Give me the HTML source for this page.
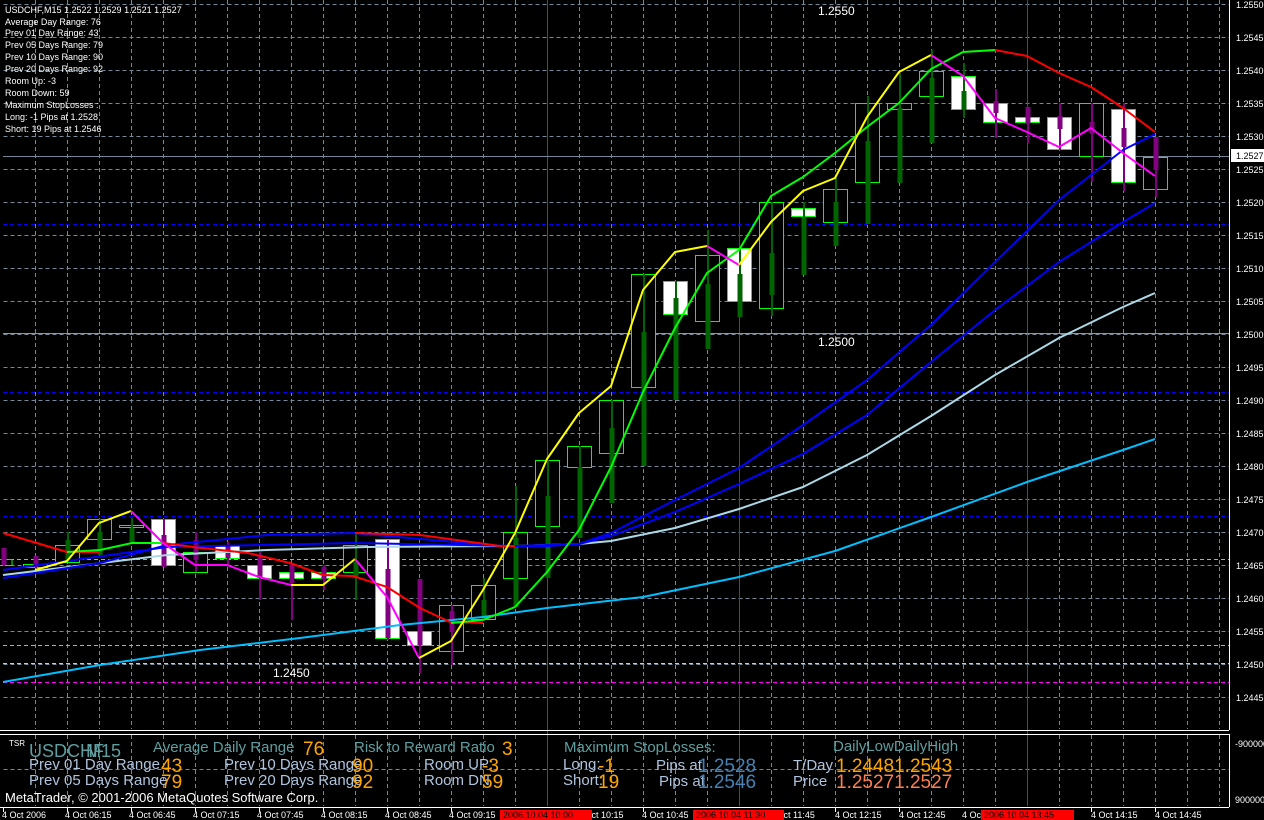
<!DOCTYPE html>
<html><head><meta charset="utf-8"><style>
html,body{margin:0;padding:0;background:#000;}
svg{display:block;font-family:"Liberation Sans",sans-serif;}
</style></head><body>
<svg width="1264" height="820" viewBox="0 0 1264 820" xmlns="http://www.w3.org/2000/svg">
<rect width="1264" height="820" fill="#000"/>
<!-- grid -->
<g stroke="#778899" stroke-width="1" stroke-dasharray="4,3" fill="none">
<path d="M3.5 4.5H1229M3.5 37.5H1229M3.5 70.5H1229M3.5 103.5H1229M3.5 136.5H1229M3.5 169.5H1229M3.5 202.5H1229M3.5 235.5H1229M3.5 268.5H1229M3.5 301.5H1229M3.5 334.5H1229M3.5 367.5H1229M3.5 400.5H1229M3.5 433.5H1229M3.5 466.5H1229M3.5 499.5H1229M3.5 532.5H1229M3.5 565.5H1229M3.5 598.5H1229M3.5 631.5H1229M3.5 664.5H1229M3.5 697.5H1229"/>
<path d="M35.5 0V729M67.5 0V729M99.5 0V729M131.5 0V729M163.5 0V729M195.5 0V729M227.5 0V729M259.5 0V729M291.5 0V729M323.5 0V729M355.5 0V729M387.5 0V729M419.5 0V729M451.5 0V729M483.5 0V729M515.5 0V729M579.5 0V729M611.5 0V729M643.5 0V729M675.5 0V729M707.5 0V729M771.5 0V729M803.5 0V729M835.5 0V729M867.5 0V729M899.5 0V729M931.5 0V729M963.5 0V729M995.5 0V729M1059.5 0V729M1091.5 0V729M1123.5 0V729M1155.5 0V729M1187.5 0V729M1219.5 0V729"/>
<path d="M3.5 769.5H1229M35.5 735V806M67.5 735V806M99.5 735V806M131.5 735V806M163.5 735V806M195.5 735V806M227.5 735V806M259.5 735V806M291.5 735V806M323.5 735V806M355.5 735V806M387.5 735V806M419.5 735V806M451.5 735V806M483.5 735V806M515.5 735V806M579.5 735V806M611.5 735V806M643.5 735V806M675.5 735V806M707.5 735V806M771.5 735V806M803.5 735V806M835.5 735V806M867.5 735V806M899.5 735V806M931.5 735V806M963.5 735V806M995.5 735V806M1059.5 735V806M1091.5 735V806M1123.5 735V806M1155.5 735V806M1187.5 735V806M1219.5 735V806"/>
</g>
<!-- red verticals -->
<g stroke="#ff0000" stroke-width="1"><path d="M547.5 0V806M739.5 0V806M1027.5 0V806"/></g>
<!-- horizontal levels -->
<g stroke-width="1" stroke-dasharray="4,3" fill="none">
<path d="M3 224.5H1229M3 392.5H1229M3 516.5H1229" stroke="#0000ff"/>
<path d="M3 559.5H1229M3 645.5H1229" stroke="#ffa500"/>
<path d="M3 663.5H1229" stroke="#ffd700"/>
<path d="M3 682.5H1229" stroke="#ff00ff"/>
</g>
<path d="M3 333.5H1229" stroke="#b8a000" stroke-width="1"/>
<path d="M3 156.5H1229" stroke="#778899" stroke-width="1"/>
<!-- candles -->
<g id="c" stroke-width="1">
<g fill="#000" stroke="#00ff00">
<rect x="-9" y="559.5" width="21" height="6"/>
<rect x="23.5" y="564.5" width="24" height="3"/>
<rect x="55.5" y="545.5" width="24" height="17"/>
<rect x="87.5" y="519.5" width="24" height="20"/>
<rect x="119.5" y="525.5" width="24" height="2"/>
<rect x="151.5" y="519.5" width="24" height="46" fill="#fff"/>
<rect x="183.5" y="552.5" width="24" height="20"/>
<rect x="215.5" y="545.5" width="24" height="13" fill="#fff"/>
<rect x="247.5" y="565.5" width="24" height="13" fill="#fff"/>
<rect x="279.5" y="572.5" width="24" height="6" fill="#fff"/>
<rect x="311.5" y="572.5" width="24" height="6" fill="#fff"/>
<rect x="343.5" y="545.5" width="24" height="27"/>
<rect x="375.5" y="539.5" width="24" height="99" fill="#fff"/>
<rect x="407.5" y="631.5" width="24" height="14" fill="#fff"/>
<rect x="439.5" y="605.5" width="24" height="46"/>
<rect x="471.5" y="585.5" width="24" height="34"/>
<rect x="503.5" y="532.5" width="24" height="46"/>
<rect x="535.5" y="460.5" width="24" height="66"/>
<rect x="567.5" y="446.5" width="24" height="21"/>
<rect x="599.5" y="400.5" width="24" height="53"/>
<rect x="631.5" y="274.5" width="24" height="113"/>
<rect x="663.5" y="281.5" width="24" height="33" fill="#fff"/>
<rect x="695.5" y="255.5" width="24" height="66"/>
<rect x="727.5" y="248.5" width="24" height="53" fill="#fff"/>
<rect x="759.5" y="202.5" width="24" height="106"/>
<rect x="791.5" y="208.5" width="24" height="8" fill="#fff"/>
<rect x="823.5" y="189.5" width="24" height="33"/>
<rect x="855.5" y="103.5" width="24" height="79"/>
<rect x="887.5" y="103.5" width="24" height="6"/>
<rect x="919.5" y="71.5" width="24" height="25"/>
<rect x="951.5" y="76.5" width="24" height="33" fill="#fff"/>
<rect x="983.5" y="103.5" width="24" height="19" fill="#fff"/>
<rect x="1015.5" y="117.5" width="24" height="5" fill="#fff"/>
<rect x="1047.5" y="117.5" width="24" height="32" fill="#fff"/>
<rect x="1079.5" y="103.5" width="24" height="53"/>
<rect x="1111.5" y="109.5" width="24" height="73" fill="#fff"/>
<rect x="1143.5" y="157.5" width="24" height="32"/>
</g>
<g stroke="#800080" stroke-width="2" fill="none">
<path d="M4 548V566M36 556V568M164 519V566M196 532V572M228 542V565M260 552V600M292 563V620M324 565V590M388 540V640M420 579V673M452 605V665M996 89V138M1028 107V143M1060 103V150M1092 103V182M1124 103V191M1156 137V197"/>
</g>
<g stroke="#800080" stroke-width="5" fill="none">
<path d="M4 548V565M36 556V567M164 535V567M196 540V560M228 545V558M260 555V578M292 563V583M324 567V580M388 569V638M420 579V645M452 611V632M996 101V113M1028 107V124M1060 116V129M1092 122V134M1124 128V147M1156 137V170"/>
</g>
<g stroke="#006400" stroke-width="2" fill="none">
<path d="M68 532V562M100 519V555M132 518V543M356 533V600M484 578V619M516 486V607M548 460V578M580 446V538M612 400V503M644 274V466M676 281V400M708 230V349M740 248V317M772 202V316M804 202V275M836 178V246M868 96V224M900 73V183M932 50V143M964 63V118"/>
</g>
<g stroke="#006400" stroke-width="5" fill="none">
<path d="M68 540V562M100 532V555M132 528V543M356 562V578M484 600V619M516 538V607M548 496V578M580 467V538M612 428V503M644 332V466M676 298V400M708 284V349M740 274V317M772 253V295M804 217V275M836 202V246M868 141V224M900 108V183M932 78V143M964 91V110"/>
</g>
</g>
<!-- MAs -->
<g fill="none" stroke-width="2" stroke-linejoin="round">
<polyline stroke="#00bfff" points="3,682 100,665 200,650 300,638 400,625 483,617 547,608 643,597 739,577 835,551 931,517 1027,482 1123,450 1155,439"/>
<polyline stroke="#add8e6" points="3,575 167,555 267,550 367,547 515,546 579,544 611,541 675,528 739,509 803,487 867,455 931,416 995,375 1059,338 1123,307 1155,293"/>
<polyline stroke="#0000ff" points="3,570 167,547 353,543 515,546 579,544 611,536 675,512 739,484 803,454 867,415 931,362 995,310 1059,262 1123,222 1155,203"/>
<polyline stroke="#0000ff" points="3,578 100,563 167,545 267,535 353,533 500,546 547,546 579,544 611,533 675,500 739,468 803,425 867,380 931,325 995,262 1059,200 1123,150 1155,134"/>
<polyline stroke="#ff0000" points="3,533 67,552 100,552"/>
<polyline stroke="#ff0000" points="163,543 193,547 248,553 290,563 323,575 353,576 387,587 420,608 450,622 483,623"/>
<polyline stroke="#ff0000" points="355,533 420,535 500,546 515,546"/>
<polyline stroke="#00ff00" points="67,552 100,550 132,543 163,543"/>
<polyline stroke="#00ff00" points="451,623 483,620 515,607 547,572 579,530 611,467 643,392 675,328 707,273 739,250 771,196 803,177 835,153 867,127 899,103 931,69 963,52 995,50"/>
<polyline stroke="#ff0000" points="995,50 1027,56 1059,73 1091,87 1123,108 1155,132"/>
<polyline stroke="#ffff00" points="35,570 67,561 99,523 131,511"/>
<polyline stroke="#ff00ff" points="131,511 163,543 195,565 227,565 259,577 291,585"/>
<polyline stroke="#ffff00" points="291,585 323,585 355,559"/>
<polyline stroke="#ff00ff" points="355,559 387,597 419,658"/>
<polyline stroke="#ffff00" points="419,658 451,641 483,590 515,533 547,459 579,413 611,386 643,290 675,252 707,246"/>
<polyline stroke="#ff00ff" points="707,246 739,265"/>
<polyline stroke="#ffff00" points="739,265 771,222 803,191 835,178 867,117 899,72 931,55"/>
<polyline stroke="#ff00ff" points="931,55 963,76 995,118 1027,132 1059,147 1091,128 1123,153 1155,176"/>
</g>
<!-- texts in chart -->
<g fill="#fff" font-size="12"><text x="818" y="15">1.2550</text><text x="818" y="346">1.2500</text><text x="273" y="677">1.2450</text></g>
<g fill="#fff" font-size="9">
<text x="5" y="13">USDCHF,M15  1.2522 1.2529 1.2521 1.2527</text>
<text x="5" y="25">Average Day  Range: 76</text>
<text x="5" y="36">Prev 01  Day  Range: 43</text>
<text x="5" y="48">Prev 05  Days Range: 79</text>
<text x="5" y="60">Prev 10  Days Range: 90</text>
<text x="5" y="72">Prev 20  Days Range: 92</text>
<text x="5" y="84">Room Up:     -3</text>
<text x="5" y="96">Room Down: 59</text>
<text x="5" y="108">Maximum StopLosses :</text>
<text x="5" y="120">Long:  -1 Pips at 1.2528</text>
<text x="5" y="132">Short: 19 Pips at 1.2546</text>
</g>
<!-- right axis -->
<path d="M1229.5 0V730M1229.5 734V807" stroke="#fff" stroke-width="1"/>
<g fill="#fff" font-size="9">
<text x="1236" y="8">1.2550</text><text x="1236" y="41">1.2545</text><text x="1236" y="74">1.2540</text><text x="1236" y="107">1.2535</text><text x="1236" y="140">1.2530</text><text x="1236" y="173">1.2525</text><text x="1236" y="206">1.2520</text><text x="1236" y="239">1.2515</text><text x="1236" y="272">1.2510</text><text x="1236" y="305">1.2505</text><text x="1236" y="338">1.2500</text><text x="1236" y="371">1.2495</text><text x="1236" y="404">1.2490</text><text x="1236" y="437">1.2485</text><text x="1236" y="470">1.2480</text><text x="1236" y="503">1.2475</text><text x="1236" y="536">1.2470</text><text x="1236" y="569">1.2465</text><text x="1236" y="602">1.2460</text><text x="1236" y="635">1.2455</text><text x="1236" y="668">1.2450</text><text x="1236" y="701">1.2445</text>
<text x="1235" y="747">-900000</text><text x="1235" y="803">9000000</text>
</g>
<rect x="1231" y="149" width="33" height="13" fill="#fff"/>
<text x="1236" y="159" font-size="9" fill="#000">1.2527</text>
<!-- panel separators -->
<path d="M0 730.5H1229M0 734.5H1229M0 807.5H1229" stroke="#fff" stroke-width="1"/>
<!-- panel texts -->
<text x="9" y="746" font-size="8" fill="#fff">TSR</text>
<g font-size="18" fill="#5f9ea0"><text x="29" y="757">USDCHF</text><text x="86" y="757">M15</text></g>
<g font-size="15" fill="#5f9ea0">
<text x="153" y="752">Average Daily Range</text>
<text x="354" y="752">Risk to Reward Ratio</text>
<text x="564" y="752">Maximum StopLosses:</text>
<text x="833" y="751">DailyLowDailyHigh</text>
</g>
<g font-size="15" fill="#b0c4de">
<text x="29" y="769">Prev 01 Day Range</text>
<text x="29" y="785">Prev 05 Days Range</text>
<text x="224" y="769">Prev 10 Days Range</text>
<text x="224" y="785">Prev 20 Days Range</text>
<text x="424" y="769">Room UP:</text>
<text x="424" y="785">Room DN</text>
<text x="563" y="769">Long:</text>
<text x="563" y="785">Short:</text>
<text x="656" y="770">Pips at</text>
<text x="659" y="786">Pips at</text>
<text x="793" y="770">T/Day</text>
<text x="793" y="786">Price</text>
</g>
<g font-size="19" fill="#ffa500">
<text x="303" y="755">76</text><text x="502" y="755">3</text>
<text x="161" y="772">43</text><text x="161" y="788">79</text>
<text x="352" y="772">90</text><text x="352" y="788">92</text>
<text x="482" y="772">-3</text><text x="482" y="788">59</text>
<text x="598" y="772">-1</text><text x="598" y="788">19</text>
<text x="836" y="772">1.24481.2543</text>
</g>
<text x="836" y="788" font-size="19" fill="#ff7f50">1.25271.2527</text>
<g font-size="19" fill="#4682b4"><text x="698" y="772">1.2528</text><text x="698" y="788">1.2546</text></g>
<text x="5" y="802" font-size="13" fill="#fff">MetaTrader, © 2001-2006 MetaQuotes Software Corp.</text>
<!-- time axis -->
<g stroke="#fff"><path d="M3.5 808V812M67.5 808V812M131.5 808V812M195.5 808V812M259.5 808V812M323.5 808V812M387.5 808V812M451.5 808V812M643.5 808V812M835.5 808V812M899.5 808V812M1091.5 808V812M1155.5 808V812"/></g>
<g font-size="9" fill="#fff">
<text x="2" y="818">4 Oct 2006</text><text x="65" y="818">4 Oct 06:15</text><text x="129" y="818">4 Oct 06:45</text><text x="193" y="818">4 Oct 07:15</text><text x="257" y="818">4 Oct 07:45</text><text x="321" y="818">4 Oct 08:15</text><text x="385" y="818">4 Oct 08:45</text><text x="449" y="818">4 Oct 09:15</text><text x="577" y="818">4 Oct 10:15</text><text x="642" y="818">4 Oct 10:45</text><text x="769" y="818">4 Oct 11:45</text><text x="835" y="818">4 Oct 12:15</text><text x="899" y="818">4 Oct 12:45</text><text x="962" y="818">4 Oct 13:15</text><text x="1091" y="818">4 Oct 14:15</text><text x="1155" y="818">4 Oct 14:45</text>
</g>
<rect x="500" y="810" width="92" height="10" fill="#ff0000"/>
<rect x="693" y="810" width="91" height="10" fill="#ff0000"/>
<rect x="981" y="810" width="93" height="10" fill="#ff0000"/>
<g font-size="9" fill="#000"><text x="503" y="818">2006.10.04 10:00</text><text x="696" y="818">2006.10.04 11:30</text><text x="984" y="818">2006.10.04 13:45</text></g>
</svg>
</body></html>
